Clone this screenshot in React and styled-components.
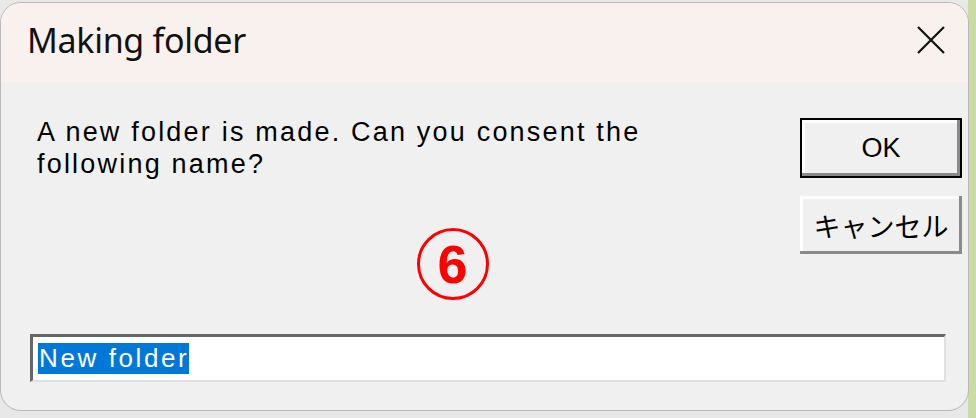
import React from 'react'
import styled, { createGlobalStyle } from 'styled-components'

const Global = createGlobalStyle`
  html, body {
    margin: 0;
    padding: 0;
    background: #e6e6e6;
  }
`

const Screen = styled.div`
  width: 976px;
  height: 418px;
  padding: 3px 8px 8px 1px;
  box-sizing: border-box;
  background: linear-gradient(to right, #e8e8e8 0, #e8e8e8 968px, #c9dca4 968px);
`

const Window = styled.div`
  height: 100%;
  display: flex;
  flex-direction: column;
  border-radius: 20px;
  overflow: hidden;
  background: #f0f0f0;
  box-shadow: 0 0 0 1px #b9b9b9;
`

const TitleBar = styled.div`
  height: 80px;
  display: flex;
  align-items: center;
  justify-content: space-between;
  padding: 0 22px 0 26px;
  background: #f9f1ed;
`

const Title = styled.div`
  font-family: "Noto Sans", "Open Sans", sans-serif;
  font-size: 34px;
  letter-spacing: -0.3px;
  color: #111;
  margin-top: -6px;
`

const Close = styled.svg`
  width: 30px;
  height: 30px;
  margin-top: -6px;
`

const Body = styled.div`
  flex: 1;
  display: grid;
  grid-template-columns: 1fr 162px;
  grid-template-rows: auto 1fr auto;
  padding: 33px 6px 28px 29px;
  column-gap: 20px;
`

const Message = styled.div`
  font-family: "Liberation Sans", Arial, sans-serif;
  font-size: 27px;
  line-height: 32px;
  letter-spacing: 2.2px;
  color: #000;
  padding-left: 7px;
  white-space: nowrap;
`

const Buttons = styled.div`
  grid-row: 1 / 3;
  grid-column: 2;
  display: flex;
  flex-direction: column;
  gap: 18px;
  padding-top: 2px;
`

const Button = styled.div`
  height: ${p => (p.$default ? '60px' : '58px')};
  box-sizing: border-box;
  display: flex;
  align-items: center;
  justify-content: center;
  background: #f0f0f0;
  border: ${p => (p.$default ? '2px solid #000' : 'none')};
  box-shadow: inset -3px -3px 0 #8a8a8a, inset 3px 3px 0 #ffffff;
  font-family: "Liberation Sans", "Noto Sans CJK JP", sans-serif;
  font-size: 27px;
  color: #000;
`

const Marker = styled.div`
  grid-column: 1;
  grid-row: 2;
  display: flex;
  justify-content: center;
  align-items: center;
  padding-left: 95px;
  margin-top: 14px;
`

const Circled = styled.div`
  width: 66px;
  height: 66px;
  border: 3px solid #ff0000;
  border-radius: 50%;
  display: flex;
  align-items: center;
  justify-content: center;
  color: #ff0000;
  font-family: "Liberation Sans", Arial, sans-serif;
  font-weight: bold;
  font-size: 54px;
  line-height: 1;
`

const Field = styled.div`
  grid-column: 1 / 3;
  grid-row: 3;
  margin-right: 16px;
  height: 48px;
  box-sizing: border-box;
  background: #fff;
  border-top: 3px solid #666;
  border-left: 3px solid #666;
  border-right: 2px solid #e0e0e0;
  border-bottom: 2px solid #e0e0e0;
  display: flex;
  align-items: center;
  padding-left: 5px;
`

const Selected = styled.span`
  background: #0078d7;
  color: #fff;
  font-family: "Liberation Sans", Arial, sans-serif;
  font-size: 26px;
  line-height: 31px;
  letter-spacing: 2.6px;
  padding: 0 0 0 1px;
`

export default function App() {
  return (
    <>
      <Global />
      <Screen>
        <Window>
          <TitleBar>
            <Title>Making folder</Title>
            <Close viewBox="0 0 30 30">
              <path d="M2 2 L28 28 M28 2 L2 28" stroke="#111" strokeWidth="2.2" fill="none" />
            </Close>
          </TitleBar>
          <Body>
            <Message>
              A new folder is made. Can you consent the
              <br />
              following name?
            </Message>
            <Buttons>
              <Button $default>OK</Button>
              <Button>キャンセル</Button>
            </Buttons>
            <Marker>
              <Circled>6</Circled>
            </Marker>
            <Field>
              <Selected>New folder</Selected>
            </Field>
          </Body>
        </Window>
      </Screen>
    </>
  )
}
